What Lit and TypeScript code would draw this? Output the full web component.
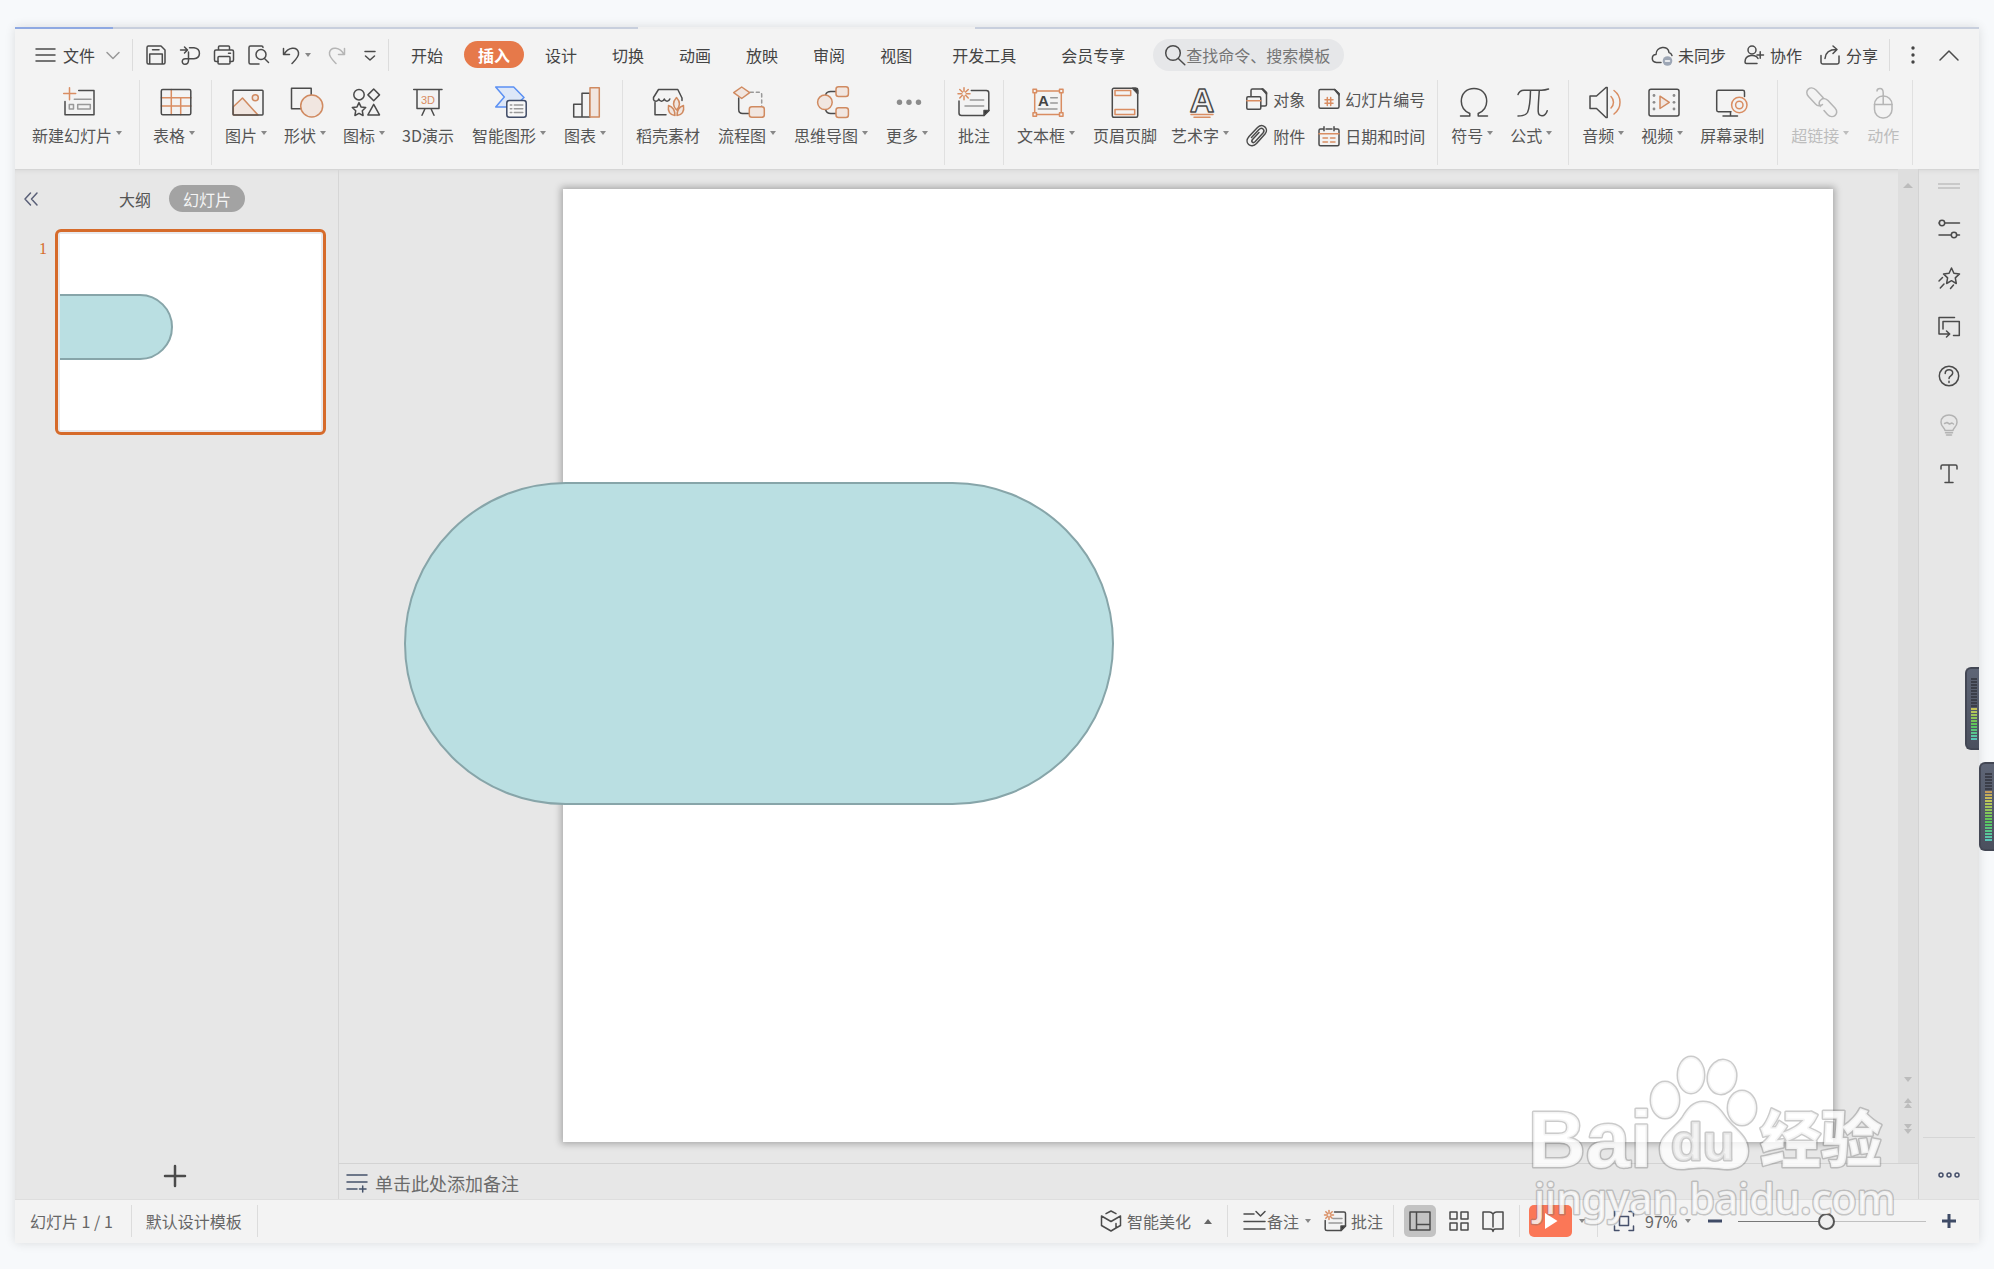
import { LitElement, html, svg, css, nothing, SVGTemplateResult, TemplateResult } from "lit";
import { customElement, property } from "lit/decorators.js";
import { classMap } from "lit/directives/class-map.js";

const icon = (size: "s" | "m" | "l", body: SVGTemplateResult) => {
  const n = size === "l" ? 32 : size === "m" ? 22 : 20;
  return html`<svg class="ico ico-${size}" viewBox="0 0 ${n} ${n}" aria-hidden="true">${body}</svg>`;
};

const caret = html`<span class="caret" aria-hidden="true"></span>`;

const spark = (x: number, y: number, r: number) => svg`
  <g class="o" transform="translate(${x} ${y})">
    ${[0, 45, 90, 135, 180, 225, 270, 315].map(
      (a) => svg`<path transform="rotate(${a})" d="M${r * 0.38} 0H${r}" />`
    )}
  </g>`;

/* 32px ribbon glyphs */
const I = {
  newSlide: svg`<path class="o" d="M.7 7.5h12M6.5 1.7v12"/><path d="M15.7 4.5H31v24.3H2V15.5"/>
    <path class="g" d="M11.3 13.2H28M6.3 18.5h4.2V23H6.3zM14.7 18.5h12.6V23H14.7z"/>`,
  table: svg`<path class="o" d="M1.3 11.7H31M1.3 20H31M11.3 3.5v25M20.7 11.7v17"/><rect x="1.3" y="3.5" width="29.5" height="25.3" rx="1.5"/>`,
  picture: svg`<path class="of" d="M1.3 20.7 10.5 12 26 29H1.3z"/><circle class="of" cx="23.3" cy="11.7" r="3"/><rect x="1" y="4.3" width="30" height="24.6" rx=".8"/>`,
  shape: svg`<path d="M.5 2.3h19.7v20.4H.5z"/><circle class="of" cx="20.7" cy="20" r="11"/>`,
  icons: svg`<circle cx="9" cy="8.7" r="5.2"/><path d="m23.7 3 5.8 5.9-5.8 5.9-5.8-5.9zM23.7 18.3l5.8 10.6H17.9z"/>
    <path d="m9 16.6 2 4.3 4.7.6-3.4 3.3.8 4.7L9 27.3l-4.1 2.2.8-4.7-3.4-3.3 4.7-.6z"/>`,
  threeD: svg`<path d="M1.7 3.5H30M5 3.5v19h22v-19M13 22.7l-3 6.6M19 22.7l3 6.6"/><text class="ot" x="16" y="18" font-size="11">3D</text>`,
  smart: svg`<path class="b" d="M.7 1h18L29 11.5 19 21H.7L9.3 11z"/><rect class="doc" x="11.8" y="14.5" width="19.4" height="16.7" rx="2.5"/>
    <path class="g" d="M15.3 19h1.5M15.3 22.8h1.5M15.3 26.6h1.5M19.3 19h8.5M19.3 22.8h8.5M19.3 26.6h8.5"/>`,
  chart: svg`<path d="M3.7 18.3H12V31H3.7zM12 7.3h8V31h-8z"/><path class="of" d="M20 1.8h9.3V31H20z"/>`,
  store: svg`<path d="M30 14.500V12L25.800 3.500H6.500L1.500 11.500v2c.8 2.500 4.500 2.500 5.300-.5 1 3 4.500 3 5.500 0 1 3 4.500 3 5.500 0M3 16.500v12.200h11"/>
    <path class="of" d="M24.500 11.500c4 4.500 3.500 9 0 12.500-3.500-3.500-4-8 0-12.500zM16.500 19.500c4.500 1.500 6.500 5 6.500 10-5-.5-7.500-4-6.500-10zM31.500 19.500c-4.500 1.500-6.500 5-6.500 10 5-.5 7.500-4 6.500-10z"/>`,
  flow: svg`<path d="M5.7 12v11.5q0 4 4 4h6.5"/><path class="g dash" d="M17.3 6.3h9q2.400 0 2.400 2.400V20"/><path class="of" d="m8.700 1 8 5.700-8 5.800-8-5.800z"/><rect class="of" x="16.300" y="20.800" width="15" height="10.500" rx="2.500"/>`,
  mind: svg`<path d="M8.700 8.500q1-3 5-3H19M8.700 24q1 3.500 5 3.500H19"/><circle class="of" cx="7.900" cy="16.300" r="7.300"/><rect class="of" x="19" y=".8" width="12.400" height="9.600" rx="2.500"/><rect class="of" x="19" y="21.800" width="12.400" height="9.600" rx="2.500"/>`,
  more: svg`<g class="dots"><circle cx="6.500" cy="16.300" r="2.700"/><circle cx="16" cy="16.300" r="2.700"/><circle cx="25.500" cy="16.300" r="2.700"/></g>`,
  comment: svg`${spark(6, 7.7, 6)}<path d="M13.300 4.500h15q2.500 0 2.500 2.500v17.500l-5 5H3.500Q1 29.500 1 27V15"/><path class="k" d="M31 24.500h-5v5z"/><path class="g" d="M12.300 14h13.400M7 20h18.700"/>`,
  textbox: svg`<path class="o" d="M2.700 5h26.600v23.500H2.700z"/><path class="o solid" d="M1 3.300h3.500v3.500H1zM27.500 3.300H31v3.500h-3.500zM1 26.700h3.500v3.500H1zM27.500 26.700H31v3.500h-3.500z"/>
    <text class="kt" x="11.500" y="19.500" font-size="15">A</text><path class="g" d="M18.700 11.700h6.600M18.700 17h6.600M6.300 22.900H25"/>`,
  header: svg`<rect x="3.300" y="2.300" width="25.400" height="29" rx="1.500"/><path class="k" d="M23.500 2.300h3l2.200 2.300v3z"/><path class="o" d="M6 4.600h15.700v4.900H6zM6 23.500h19.700v4.900H6z"/>`,
  art: svg`<text class="outl" x="16" y="25.500" font-size="34">A</text><path class="o" d="M5 28.600h22M8 31.200h16"/>`,
  omega: svg`<path d="M2.500 30h9.300v-2.500C6 25 3.300 20.500 3.300 15.200 3.300 7.500 8.500 2.500 16 2.500s12.700 5 12.700 12.700c0 5.300-2.700 9.800-8.500 12.300V30h9.300"/>`,
  pi: svg`<path d="M1 8.500Q2.500 4.200 7 4.200h17.500Q28 4.200 31.500 3M13.500 4.500C13.300 14 12.500 22 10.500 26.500Q8.500 30 1 30M22.300 4.500C21.500 15 21 22 21.200 25.500c.3 5.500 7 6 9-.8"/>`,
  audio: svg`<path d="M1 10h6.500L17 1.500h1.200V31.500H17L7.500 22.500H1z"/><path class="o" d="M22 10.500c3.300 3.300 3.300 8 0 11.500M25 4.500c8 6 8 17.500 0 23.500"/>`,
  video: svg`<rect x="1" y="3.300" width="30" height="26.700" rx="2"/><path class="of" d="M12 10.200v12.300l9.300-6.200z"/>
    <g class="dots"><circle cx="6" cy="9.500" r="1.400"/><circle cx="6" cy="16.300" r="1.400"/><circle cx="6" cy="23" r="1.400"/><circle cx="26" cy="9.500" r="1.400"/><circle cx="26" cy="16.300" r="1.400"/><circle cx="26" cy="23" r="1.400"/></g>`,
  record: svg`<path d="M28.500 10.500V6q0-1.700-1.700-1.700H2.200Q.7 4.300.7 6v18q0 1.700 1.500 1.700H15M14.500 25.700v4M7 29.900h14.500"/><circle class="o" cx="23.300" cy="19" r="7.700"/><circle class="o" cx="23.300" cy="19" r="3.700"/>`,
  link: svg`<path d="M17 11.500 10 4C4.500-1.500-2.500 5 2.500 10.500l7 7.500c2 2.300 5 2.500 7 .5M14.500 20.500c-2-2.500-1.500-5 .5-6.700 2-1.800 5-1.500 7 .7l7 7.500c5 5.500-2 12-7.500 6.500l-3.500-4"/>`,
  mouse: svg`<rect x="7.500" y="10" width="17.500" height="22" rx="8.500"/><path d="M7.500 18.500H25M16.200 18.500V7c0-4-1.500-4.500-3.200-4.500-1.500 0-3 .5-3 2.500"/>`,
};

/* 22px glyphs */
const M = {
  object: svg`<path d="M5 8V2.500Q5 1 6.500 1h10l4 4v11.500q0 1.500-1.500 1.500h-4"/><path class="k" d="M16 1h1l3.500 3.500V6z"/><rect x=".8" y="8.800" width="14" height="12.400" rx="1.200"/><path class="o" d="M.8 12.700h14"/>`,
  clip: svg`<path d="m5.500 12.500 7.500-8c3-3 6.500.5 4 3.500l-8 8.700c-2 2-4.300 0-2.500-2.200l6.500-7M11.500 2.500 3 11.500c-5.500 6.500 2 12.500 7.500 7l8.500-9.500c4.500-5.500-2.500-11.500-7.500-6.500"/>`,
  number: svg`<path d="M2.300 1.500h14.500L21 5.500v13.300q0 1.500-1.500 1.500h-17Q1 20.300 1 18.800V3q0-1.500 1.300-1.500z"/><path class="k" d="M16.500 1.500 21 5.700V7z"/><path class="o" d="M9.300 9.500v8M12.700 9.500v8M7 11.800h8M7 15.200h8"/>`,
  date: svg`<path d="M6 4H2.500Q1 4 1 5.500v13.700q0 1.500 1.500 1.500h17q1.500 0 1.500-1.500V5.500Q21 4 19.500 4H17M8 4h6M6 1.800v4M16 1.800v4"/><path class="o" d="M1 8.700h20M5 13h4.500M12.500 13H17M5 17h4.500M12.500 17H17"/>`,
  save: svg`<path d="M3 2h13l4 4v12.500q0 1.500-1.500 1.500h-15Q2 20 2 18.500V3.500Q2 2 3.500 2M4.700 20V10h12.600v10M7.500 5.700h6.500"/>`,
  pdf: svg`<path d="M1.500 6h6.500M5.500 3l3 3-3 3M10.500 3.700H15c7.500 1 7 10.500 0 11H6.500C2 14.500 2.500 20.500 6 20.300c2.500 0 3.500-1.500 3.500-4V8"/>`,
  print: svg`<path d="M5.500 6V3Q5.500 2 6.500 2h9q1 0 1 1v3M5 17.500H3Q1.500 17.500 1.500 16V7.500Q1.500 6 3 6h16q1.500 0 1.500 1.500V16q0 1.500-1.500 1.500h-2M15.500 9.200h2"/><rect x="5" y="12.500" width="12" height="7.500" rx="1"/>`,
  preview: svg`<path d="M12 20H3.500Q2 20 2 18.500v-15Q2 2 3.500 2h11Q16 2 16 3.500"/><circle cx="14" cy="10.500" r="5"/><path d="m17.500 14.500 4 4"/>`,
  undo: svg`<path d="M2.500 4.500v6h6M3 10.500C7 3 16 2 17.500 8.500c.8 4-3 7.500-6.500 11"/>`,
  redo: svg`<path d="M19.500 4.500v6h-6M19 10.500C15 3 6 2 4.500 8.500c-.8 4 3 7.500 6.500 11"/>`,
  overflow: svg`<path d="M6 7.500h10M6.500 12l4.500 4 4.500-4"/>`,
  search: svg`<circle cx="9" cy="9" r="7.300"/><path d="m14.300 14.500 6.500 6.200"/>`,
  cloud: svg`<path d="M10 18.500H5.500C-.5 18 .5 10.500 5 10.500 5 2 17.500 1 18 8.500c1.500.3 2.500 1.500 3 3"/><circle class="badge" cx="16.500" cy="17" r="4.800"/><path class="w" d="M14.500 17h4"/>`,
  collab: svg`<circle cx="9" cy="6" r="4"/><path d="M14 19.500H3.500Q2 19.500 2 18c0-8 11-8 13-3.500M14 11h6.500M17.200 7.800v6.400"/>`,
  share: svg`<path d="M2 11.500v6.800Q2 20 3.700 20h14.600q1.700 0 1.700-1.700V12M6 14.500C6.500 8 11 5.500 17.500 5.500M14 2l4 3.500-4 4"/>`,
  notes: svg`<path class="n" d="M1 3h20M1 10h20M1 17h10M13.500 17h6.500M16.700 14v6"/>`,
  sliders: svg`<path d="M7 5h14.500M1 5h.5M1 17h12M18.500 17h3"/><circle cx="4" cy="5" r="2.700"/><circle cx="16" cy="17" r="2.700"/>`,
  star: svg`<path d="m13.500 1 2.400 5.200 5.600.7-4.200 4 1 5.600-4.800-2.800-4.900 2.800 1-5.600-4.100-4 5.600-.7zM4.500 10.500 1 14M6 17l-3.700 4M15.500 18l-3 3.500"/>`,
  transition: svg`<path d="M16.500 1.500H1V18h10.500M8.500 15l3.200 3-3.200 3M5 13V5.500h16.300V19.500H15.500"/>`,
  help: svg`<circle cx="11" cy="11" r="9.700"/><path d="M7.200 8.500c0-5 8-4.800 7.500-.3-.3 2.800-3.700 2.500-3.700 5.300M11 16.200v1.200"/>`,
  bulb: svg`<path d="M7 16.500c0-3-4-3.500-4-8.300C3 3.700 6.500 1 11 1s8 2.700 8 7.200c0 4.800-4 5.300-4 8.300zM7.500 18.700h7M8.500 21h5M6.500 9.500l2.500-1 2.500 1.500 2.500-1 1.500 1"/>`,
  text: svg`<path d="M3 6V3.500Q3 2 4.500 2h13Q19 2 19 3.500V6M11 2v17.500M7 19.500h8"/>`,
  cube: svg`<path d="M6 3.700 11 1l5 2.700M20.500 6v9.500L16 18M1.500 6v9.500l9.500 5.500M1.500 6 11 11.500 20.500 6M11 21l5-3v-4.500"/>`,
  noteToggle: svg`<path d="M1 4h10M1 11.500h21M1 19h21M13 1.500l4.500 4.500L22 1.500"/>`,
  smallComment: svg`${spark(5, 5, 4.5)}<path d="M10.500 2H20q1.500 0 1.500 1.500V16L17 20.500H3Q1.200 20.500 1.200 19V10.500"/><path class="k" d="M21.500 16H17v4.500z"/><path class="g" d="M9 8.500h9M5 13h13"/>`,
  normal: svg`<path d="M1 2h20v18H1zM7.500 2v18M7.500 14.500H21"/>`,
  grid: svg`<path d="M2 2h7v7H2zM13 2h7v7h-7zM2 13h7v7H2zM13 13h7v7h-7z"/>`,
  book: svg`<path d="M11 4Q9.500 2 7.500 2H1v17h7.500Q11 19 11 21.500 11 19 13.500 19H21V2h-6.500Q12.500 2 11 4v13"/>`,
  fit: svg`<path d="M1.500 6V1.500H6M16 1.500h4.500V6M20.500 16v4.500H16M6 20.500H1.500V16M6.500 6.500h9v9h-9z"/>`,
};

interface Tool {
  label: string;
  glyph: SVGTemplateResult;
  menu?: boolean;
  off?: boolean;
  roomy?: boolean;
}

const ribbon: Tool[][] = [
  [{ label: "新建幻灯片", glyph: I.newSlide, menu: true }],
  [{ label: "表格", glyph: I.table, menu: true }],
  [
    { label: "图片", glyph: I.picture, menu: true },
    { label: "形状", glyph: I.shape, menu: true },
    { label: "图标", glyph: I.icons, menu: true },
    { label: "3D演示", glyph: I.threeD, roomy: true },
    { label: "智能图形", glyph: I.smart, menu: true },
    { label: "图表", glyph: I.chart, menu: true },
  ],
  [
    { label: "稻壳素材", glyph: I.store, roomy: true },
    { label: "流程图", glyph: I.flow, menu: true },
    { label: "思维导图", glyph: I.mind, menu: true },
    { label: "更多", glyph: I.more, menu: true },
  ],
  [{ label: "批注", glyph: I.comment }],
  [
    { label: "文本框", glyph: I.textbox, menu: true },
    { label: "页眉页脚", glyph: I.header },
    { label: "艺术字", glyph: I.art, menu: true },
  ],
  [
    { label: "符号", glyph: I.omega, menu: true },
    { label: "公式", glyph: I.pi, menu: true },
  ],
  [
    { label: "音频", glyph: I.audio, menu: true },
    { label: "视频", glyph: I.video, menu: true },
    { label: "屏幕录制", glyph: I.record },
  ],
  [
    { label: "超链接", glyph: I.link, menu: true, off: true },
    { label: "动作", glyph: I.mouse, off: true },
  ],
];

const compactTools = [
  { label: "对象", glyph: M.object },
  { label: "幻灯片编号", glyph: M.number },
  { label: "附件", glyph: M.clip },
  { label: "日期和时间", glyph: M.date },
];

const tabs = ["开始", "插入", "设计", "切换", "动画", "放映", "审阅", "视图", "开发工具", "会员专享"];

const shared = css`
  * {
    box-sizing: border-box;
  }
  button {
    display: inline-flex;
    align-items: center;
    margin: 0;
    padding: 0;
    border: 0;
    background: none;
    color: inherit;
    font: inherit;
    white-space: nowrap;
  }
  .ico {
    display: block;
    flex: none;
    overflow: visible;
    fill: none;
    stroke: #4b4b4b;
    stroke-width: 1.5;
    stroke-linecap: round;
    stroke-linejoin: round;
  }
  .ico-l {
    width: 32px;
    height: 32px;
  }
  .ico-m {
    width: 22px;
    height: 22px;
  }
  .ico-s {
    width: 20px;
    height: 20px;
  }
  .o {
    stroke: #d98d62;
  }
  .of {
    stroke: #d08a60;
    fill: #f1e6e0;
  }
  .solid.o {
    fill: #f3f3f3;
  }
  .g {
    stroke: #999;
  }
  .dash {
    stroke-dasharray: 3 3;
  }
  .b {
    stroke: #5b90f3;
    fill: #dde7f8;
  }
  .doc {
    stroke: #3f4b66;
    fill: #f7f7f7;
  }
  .k {
    fill: #333;
  }
  .n {
    stroke: #46536b;
  }
  .dots {
    fill: #8b8b8b;
    stroke: none;
  }
  .badge {
    fill: #9da6b5;
    stroke: none;
  }
  .w {
    stroke: #fff;
  }
  .ot,
  .kt,
  .outl {
    text-anchor: middle;
    font-family: "Liberation Sans", sans-serif;
  }
  .ot {
    fill: #d98d62;
    stroke: none;
  }
  .kt {
    fill: #444;
    stroke: none;
    font-weight: 700;
  }
  .outl {
    font-weight: 700;
    stroke-width: 1.5;
  }
  .caret {
    flex: none;
    display: flex;
    justify-content: center;
    width: 14px;
  }
  .caret::before {
    content: "";
    border: 3px solid transparent;
    border-top: 4px solid #888;
    border-bottom: 0;
  }
  .sep {
    flex: none;
    width: 1px;
    height: 32px;
    background: #dcdcdc;
  }
`;

@customElement("slide-page")
export class SlidePage extends LitElement {
  static styles = css`
    :host {
      display: block;
      position: relative;
      background: #fff;
    }
    .pill {
      position: absolute;
      left: -12.5%;
      top: 30.7%;
      width: 55.9%;
      height: 33.9%;
      box-sizing: border-box;
      border: 2px solid #87a5a9;
      border-radius: 999px;
      background: #badfe2;
    }
  `;
  render() {
    return html`<div class="pill"></div>`;
  }
}

@customElement("level-meter")
export class LevelMeter extends LitElement {
  @property({ type: Number }) bars = 20;
  @property({ type: Number }) idle = 10;
  @property({ type: Number }) hue = 58;
  static styles = css`
    :host {
      display: flex;
      flex-direction: column;
      gap: 1px;
      box-sizing: border-box;
      padding: 9px 2px 8px 4px;
      border: 2px solid #434754;
      border-right: 0;
      border-radius: 6px 0 0 6px;
      background: linear-gradient(#5e6576, #4b505e);
    }
    .bar {
      height: 2px;
      background: #3b3e49;
    }
  `;
  render() {
    const lit = this.bars - this.idle;
    return Array.from({ length: this.bars }, (_, i) => {
      const t = (i - this.idle) / (lit - 1);
      return i < this.idle
        ? html`<span class="bar"></span>`
        : html`<span class="bar" style="background:hsl(${this.hue + t * (172 - this.hue)} 48% 56%)"></span>`;
    });
  }
}

@customElement("ribbon-bar")
export class RibbonBar extends LitElement {
  static styles = [
    shared,
    css`
      :host {
        display: flex;
        height: 89px;
        color: #555;
      }
      .group {
        display: flex;
        align-items: flex-start;
        height: 85px;
        padding: 0 6px;
        border-right: 1px solid #e0e0e0;
      }
      .group:first-child {
        padding-left: 10px;
      }
      .tool {
        flex-direction: column;
        gap: 5px;
        padding: 6px 7px 0;
        line-height: 24px;
      }
      .short .caret {
        width: 13px;
      }
      .roomy {
        padding-right: 11px;
      }
      .label {
        display: flex;
        align-items: center;
      }
      .label .caret {
        padding-bottom: 4px;
      }
      .off {
        color: #bdbdbd;
      }
      .off .ico {
        stroke: #b5b5b5;
      }
      .off .caret {
        opacity: 0.5;
      }
      .compact {
        display: grid;
        grid-template-columns: auto auto;
        gap: 13px;
        padding: 7px 6px 0;
      }
      .compact button {
        gap: 5px;
        line-height: 24px;
      }
    `,
  ];

  private tool(t: Tool) {
    const classes = { tool: true, off: !!t.off, roomy: !!t.roomy, short: t.label.length === 2 };
    return html`<button class=${classMap(classes)}>
      ${icon("l", t.glyph)}<span class="label">${t.label}${t.menu ? caret : nothing}</span>
    </button>`;
  }

  render() {
    return ribbon.map(
      (g) => html`<div class="group">
        ${g.map((t) => this.tool(t))}
        ${g[0].label === "文本框"
          ? html`<div class="compact">
              ${compactTools.map((t) => html`<button>${icon("m", t.glyph)}<span>${t.label}</span></button>`)}
            </div>`
          : nothing}
      </div>`
    );
  }
}

@customElement("top-bar")
export class TopBar extends LitElement {
  static styles = [
    shared,
    css`
      :host {
        display: flex;
        align-items: center;
        height: 51px;
        padding: 0 20px 0 21px;
        color: #444;
        line-height: 24px;
      }
      .file {
        gap: 8px;
        margin-right: 13px;
      }
      .chev {
        width: 12px;
        height: 8px;
        margin-left: 4px;
        stroke: #999;
      }
      .quick {
        display: flex;
        align-items: center;
        gap: 12px;
        padding: 0 7px 0 12px;
      }
      .quick .caret {
        width: 10px;
      }
      .faded .ico {
        stroke: #b5b5b5;
      }
      .tabs {
        display: flex;
        gap: 7px;
        padding: 0 9px 0 8px;
      }
      .tab {
        height: 27px;
        padding: 0 14px;
        border-radius: 14px;
      }
      .long {
        padding: 0 19px;
      }
      .active {
        background: #e6794a;
        color: #fff;
        font-weight: 700;
      }
      .search {
        display: flex;
        align-items: center;
        width: 191px;
        height: 32px;
        padding: 0 10px 0 11px;
        border-radius: 16px;
        background: #e6e7e9;
      }
      .search input {
        flex: 1;
        min-width: 0;
        padding: 0;
        border: 0;
        outline: 0;
        background: none;
        color: #555;
        font: inherit;
      }
      .search input::placeholder {
        color: #757575;
        opacity: 1;
      }
      .right {
        display: flex;
        align-items: center;
        gap: 17px;
        margin-left: auto;
      }
      .right button {
        gap: 5px;
      }
      .right .sep {
        margin: 0 3px 0 -6px;
      }
      .kebab {
        width: 6px;
      }
      .kebab .dots {
        fill: #444;
      }
      .fold {
        margin-left: 6px;
      }
    `,
  ];

  render() {
    const q = (name: string, g: SVGTemplateResult) => html`<button aria-label=${name}>${icon("m", g)}</button>`;
    return html`
      <button class="file">
        <svg class="ico" width="19" height="16" viewBox="0 0 19 16" aria-hidden="true"><path d="M0 2h19M0 8h19M0 14h19" /></svg>
        <span>文件</span>
        <svg class="ico chev" viewBox="0 0 12 8" aria-hidden="true"><path d="m0 1.5 6 6 6-6" /></svg>
      </button>
      <span class="sep"></span>
      <div class="quick">
        ${q("保存", M.save)}${q("输出为PDF", M.pdf)}${q("打印", M.print)}${q("打印预览", M.preview)}
        <button aria-label="撤销">${icon("m", M.undo)}${caret}</button>
        <button class="faded" aria-label="恢复">${icon("m", M.redo)}</button>
        ${q("自定义快速访问工具栏", M.overflow)}
      </div>
      <span class="sep"></span>
      <nav class="tabs">
        ${tabs.map(
          (t) => html`<button class=${classMap({ tab: true, active: t === "插入", long: t.length > 2 })}>${t}</button>`
        )}
      </nav>
      <label class="search">
        ${icon("m", M.search)}
        <input type="text" aria-label="查找命令、搜索模板" placeholder="查找命令、搜索模板" />
      </label>
      <div class="right">
        <button>${icon("m", M.cloud)}未同步</button>
        <button>${icon("m", M.collab)}协作</button>
        <button>${icon("m", M.share)}分享</button>
        <span class="sep"></span>
        <button aria-label="更多选项">
          <svg class="ico kebab" height="20" viewBox="0 0 6 20" aria-hidden="true">
            <g class="dots"><circle cx="3" cy="3" r="1.7" /><circle cx="3" cy="10" r="1.7" /><circle cx="3" cy="17" r="1.7" /></g>
          </svg>
        </button>
        <button class="fold" aria-label="收起功能区">
          <svg class="ico" width="20" height="12" viewBox="0 0 20 12" aria-hidden="true"><path d="m1 11 9-9 9 9" /></svg>
        </button>
      </div>
    `;
  }
}

@customElement("status-bar")
export class StatusBar extends LitElement {
  static styles = [
    shared,
    css`
      :host {
        display: flex;
        align-items: center;
        height: 44px;
        padding: 0 23px 1px 15px;
        color: #666;
        line-height: 24px;
      }
      .sep {
        margin: 0 15px;
      }
      .tight {
        margin: 0 10px;
      }
      .loose {
        margin: 0 14px 0 18px;
      }
      .before-play {
        margin-right: 9px;
      }
      .after-play {
        margin-left: 8px;
      }
      .spacer {
        flex: 1;
      }
      .beautify {
        gap: 5px;
      }
      .up {
        margin-left: 8px;
        border: 4px solid transparent;
        border-bottom: 5px solid #666;
        border-top: 0;
      }
      .notes {
        gap: 2px;
        margin-right: 9px;
      }
      .remarks {
        gap: 5px;
      }
      .views {
        display: flex;
        align-items: center;
        gap: 12px;
      }
      .view {
        justify-content: center;
        width: 32px;
        height: 32px;
        border-radius: 5px;
        background: #c3c3c3;
      }
      .play {
        justify-content: center;
        width: 43px;
        height: 32px;
        margin-right: 3px;
        border-radius: 5px;
        background: #fb7757;
      }
      .play svg {
        width: 14px;
        height: 18px;
        fill: #fff;
      }
      .navy .ico {
        stroke: #46506b;
      }
      .zoom {
        margin-left: 10px;
      }
      .percent {
        min-width: 36px;
        text-align: left;
      }
      .step {
        width: 14px;
        height: 14px;
        fill: none;
        stroke: #3f4b66;
        stroke-width: 3;
      }
      .minus {
        margin: 0 16px 0 13px;
      }
      input {
        appearance: none;
        width: 188px;
        height: 18px;
        margin: 0 16px 0 0;
        background: linear-gradient(90deg, #777 47%, #c0c0c0 47%) center / 100% 1px no-repeat;
      }
      input::-webkit-slider-thumb {
        appearance: none;
        width: 17px;
        height: 17px;
        border: 2px solid #555;
        border-radius: 50%;
        background: #eee;
      }
    `,
  ];

  render() {
    return html`
      <span>幻灯片 1 / 1</span><span class="sep loose"></span><span>默认设计模板</span><span class="sep"></span>
      <span class="spacer"></span>
      <button class="beautify">${icon("m", M.cube)}智能美化<span class="up"></span></button>
      <span class="sep"></span>
      <button class="notes">${icon("m", M.noteToggle)}<span>备注</span>${caret}</button>
      <button class="remarks">${icon("m", M.smallComment)}批注</button>
      <span class="sep tight"></span>
      <div class="views">
        <button class="view" aria-label="普通视图">${icon("m", M.normal)}</button>
        <button aria-label="幻灯片浏览">${icon("m", M.grid)}</button>
        <button aria-label="阅读视图">${icon("m", M.book)}</button>
      </div>
      <span class="sep before-play"></span>
      <button class="play" aria-label="从当前幻灯片开始播放">
        <svg viewBox="0 0 14 18" aria-hidden="true"><path d="M1 1l12.5 8L1 17z" /></svg>
      </button>
      <button aria-label="播放选项">${caret}</button>
      <span class="sep after-play"></span>
      <button class="navy" aria-label="最佳显示比例">${icon("m", M.fit)}</button>
      <button class="zoom"><span class="percent">97%</span>${caret}</button>
      <button class="minus" aria-label="缩小"><svg class="step" viewBox="0 0 14 14" aria-hidden="true"><path d="M0 7h14" /></svg></button>
      <input type="range" min="0" max="100" value="47" aria-label="缩放" />
      <button aria-label="放大"><svg class="step" viewBox="0 0 14 14" aria-hidden="true"><path d="M0 7h14M7 0v14" /></svg></button>
    `;
  }
}

@customElement("app-root")
export class AppRoot extends LitElement {
  static styles = [
    shared,
    css`
      :host {
        display: flex;
        flex-direction: column;
        position: relative;
        box-sizing: border-box;
        min-height: 100vh;
        padding: 27px 15px 26px;
        overflow: hidden;
        background: #f7f9fb;
        color: #555;
        font: 16px/24px "Noto Sans CJK SC", "Noto Sans", sans-serif;
      }
      .window {
        flex: 1;
        display: flex;
        flex-direction: column;
        background: #f3f3f3;
        box-shadow: 0 0 10px rgba(0, 0, 0, 0.12);
      }
      .strip {
        display: flex;
        height: 2px;
        background: #c8cfdd;
      }
      .strip-a {
        width: 5%;
        background: #8fa9e2;
      }
      .strip-b {
        width: 17.2%;
        margin-left: 26.7%;
        background: #f0f0f0;
      }
      .body {
        flex: 1;
        display: flex;
        min-height: 0;
        background: #e7e7e7;
        box-shadow: inset 0 1px #d5d5d5, inset 0 4px 4px -2px #d8d8d8;
      }
      .outline {
        display: flex;
        flex-direction: column;
        width: 324px;
        padding: 16px 12px 12px 9px;
        border-right: 1px solid #d6d6d6;
      }
      .modes {
        display: flex;
        align-items: center;
        height: 27px;
      }
      .modes .ico {
        stroke: #5a6078;
      }
      .mode {
        margin-left: 81px;
      }
      .modes button {
        line-height: 22px;
      }
      .chosen {
        height: 27px;
        margin-left: 18px;
        padding: 0 14px;
        border-radius: 14px;
        background: #a3a3a3;
        color: #f5f5f5;
      }
      .row {
        display: flex;
        gap: 8px;
        padding: 17px 0 0 15px;
      }
      .num {
        padding-top: 8px;
        color: #d66b2b;
        font-family: "Liberation Serif", serif;
      }
      .thumb {
        flex: 1;
        padding: 2px;
        border: 3px solid #d66b2b;
        border-radius: 6px;
        background: #e9e9ec;
      }
      .thumb slide-page {
        width: 100%;
        aspect-ratio: 4 / 3;
        overflow: hidden;
      }
      .add {
        align-self: center;
        margin-top: auto;
        margin-right: 1px;
      }
      .add .ico {
        stroke-width: 2.5;
      }
      .main {
        flex: 1;
        display: flex;
        flex-direction: column;
        min-width: 0;
      }
      .stage {
        flex: 1;
        display: flex;
      }
      .canvas {
        flex: 1;
        display: flex;
        padding: 20px 65px 21px 224px;
      }
      .canvas slide-page {
        flex: 1;
        box-shadow: 0 0 7px 2px rgba(0, 0, 0, 0.28);
      }
      .scroll {
        display: flex;
        flex-direction: column;
        align-items: center;
        gap: 16px;
        width: 20px;
        padding: 14px 0 29px;
        background: #dedede;
      }
      .scroll svg {
        width: 10px;
        fill: #bcbcbc;
      }
      .scroll .grow {
        flex: 1;
      }
      .remark {
        display: flex;
        align-items: center;
        gap: 7px;
        height: 36px;
        padding: 2px 7px 0;
        border-top: 1px solid #d3d3d3;
        color: #6b6b6b;
        font-size: 18px;
      }
      .rail {
        display: flex;
        flex-direction: column;
        align-items: center;
        gap: 27px;
        width: 61px;
        padding: 14px 4px;
        border-left: 1px solid #d3d3d3;
      }
      .grip {
        width: 22px;
        height: 6px;
        margin-bottom: 2px;
        border: solid #c9c9c9;
        border-width: 2px 0;
      }
      .rail .dim .ico {
        stroke: #b3b3b3;
      }
      .more {
        justify-content: center;
        align-self: stretch;
        height: 48px;
        margin-top: auto;
        padding-top: 26px;
        border-top: 1px solid #d6d6d6;
      }
      .more .ico {
        stroke: #46506b;
      }
      .foot {
        border-top: 1px solid #dedede;
      }
      .meter {
        position: absolute;
      }
      .meter-a {
        right: 15px;
        top: 667px;
        width: 14px;
      }
      .meter-b {
        right: 0;
        top: 762px;
        width: 15px;
      }
      .mark {
        position: absolute;
        right: 94px;
        bottom: 34px;
        width: 380px;
        height: 190px;
        pointer-events: none;
        fill: rgba(255, 255, 255, 0.8);
        stroke: rgba(110, 110, 110, 0.36);
        stroke-width: 3;
        stroke-linejoin: round;
        paint-order: stroke;
      }
      .mark .brand {
        font: 900 80px "Liberation Sans", sans-serif;
      }
      .mark .paw {
        font: 700 52px "Liberation Sans", sans-serif;
        fill: rgba(240, 240, 240, 0.7);
      }
      .mark .cjk {
        font: 900 61px "Noto Sans CJK SC", sans-serif;
      }
      .mark .url {
        font: 500 41px "Noto Sans", sans-serif;
      }
    `,
  ];

  private rail(name: string, g: SVGTemplateResult, dim = false): TemplateResult {
    return html`<button class=${classMap({ dim })} aria-label=${name}>${icon("m", g)}</button>`;
  }

  render() {
    const tri = (d: string, h: number) => html`<svg height=${h} viewBox="0 0 10 ${h}" aria-hidden="true"><path d=${d} /></svg>`;
    return html`
      <div class="window">
        <div class="strip"><span class="strip-a"></span><span class="strip-b"></span></div>
        <top-bar></top-bar>
        <ribbon-bar></ribbon-bar>
        <div class="body">
          <aside class="outline">
            <div class="modes">
              <button aria-label="收起窗格">
                <svg class="ico" width="14" height="14" viewBox="0 0 14 14" aria-hidden="true"><path d="M6.5 1 1 7l5.5 6M13 1 7.5 7l5.5 6" /></svg>
              </button>
              <button class="mode">大纲</button>
              <button class="chosen">幻灯片</button>
            </div>
            <div class="row">
              <span class="num">1</span>
              <div class="thumb"><slide-page></slide-page></div>
            </div>
            <button class="add" aria-label="新建幻灯片">${icon("m", svg`<path d="M1 11h20M11 1v20"/>`)}</button>
          </aside>
          <main class="main">
            <div class="stage">
              <div class="canvas"><slide-page></slide-page></div>
              <div class="scroll">
                ${tri("M0 5 5 0l5 5z", 5)}
                <span class="grow"></span>
                ${tri("M1 0h8L5 5z", 5)}${tri("M1 5h8L5 0zM1 10h8L5 5z", 10)}${tri("M1 0h8L5 5zM1 5h8L5 10z", 10)}
              </div>
            </div>
            <div class="remark">${icon("m", M.notes)}<span>单击此处添加备注</span></div>
          </main>
          <aside class="rail">
            <span class="grip"></span>
            ${this.rail("对象属性", M.sliders)}${this.rail("动画窗格", M.star)}${this.rail("幻灯片切换", M.transition)}
            ${this.rail("帮助中心", M.help)}${this.rail("建议", M.bulb, true)}${this.rail("字体", M.text)}
            <button class="more" aria-label="更多">
              <svg class="ico" width="24" height="8" viewBox="0 0 24 8" aria-hidden="true">
                <circle cx="4" cy="4" r="2" /><circle cx="12" cy="4" r="2" /><circle cx="20" cy="4" r="2" />
              </svg>
            </button>
          </aside>
        </div>
        <status-bar class="foot"></status-bar>
      </div>
      <level-meter class="meter meter-a" bars="21" idle="10"></level-meter>
      <level-meter class="meter meter-b" bars="23" idle="6" hue="38"></level-meter>
      <svg class="mark" viewBox="1520 1045 380 190" aria-hidden="true">
        <text class="brand" x="1528" y="1167">Bai</text>
        <ellipse cx="1665" cy="1100" rx="14" ry="18" />
        <ellipse cx="1691" cy="1075" rx="13" ry="18" />
        <ellipse cx="1722" cy="1077" rx="14" ry="17" transform="rotate(12 1722 1077)" />
        <ellipse cx="1742" cy="1108" rx="14" ry="17" />
        <path d="M1703 1102c10 0 16 6 22 15 8 12 23 18 23 34 0 14-12 19-24 18-14-2-28-2-40 0-14 1-24-6-24-20 0-14 15-20 23-32 5-8 10-15 20-15z" />
        <text class="paw" x="1671" y="1160">du</text>
        <text class="cjk" x="1760" y="1162">经验</text>
        <text class="url" x="1534" y="1214">jingyan.baidu.com</text>
      </svg>
    `;
  }
}
